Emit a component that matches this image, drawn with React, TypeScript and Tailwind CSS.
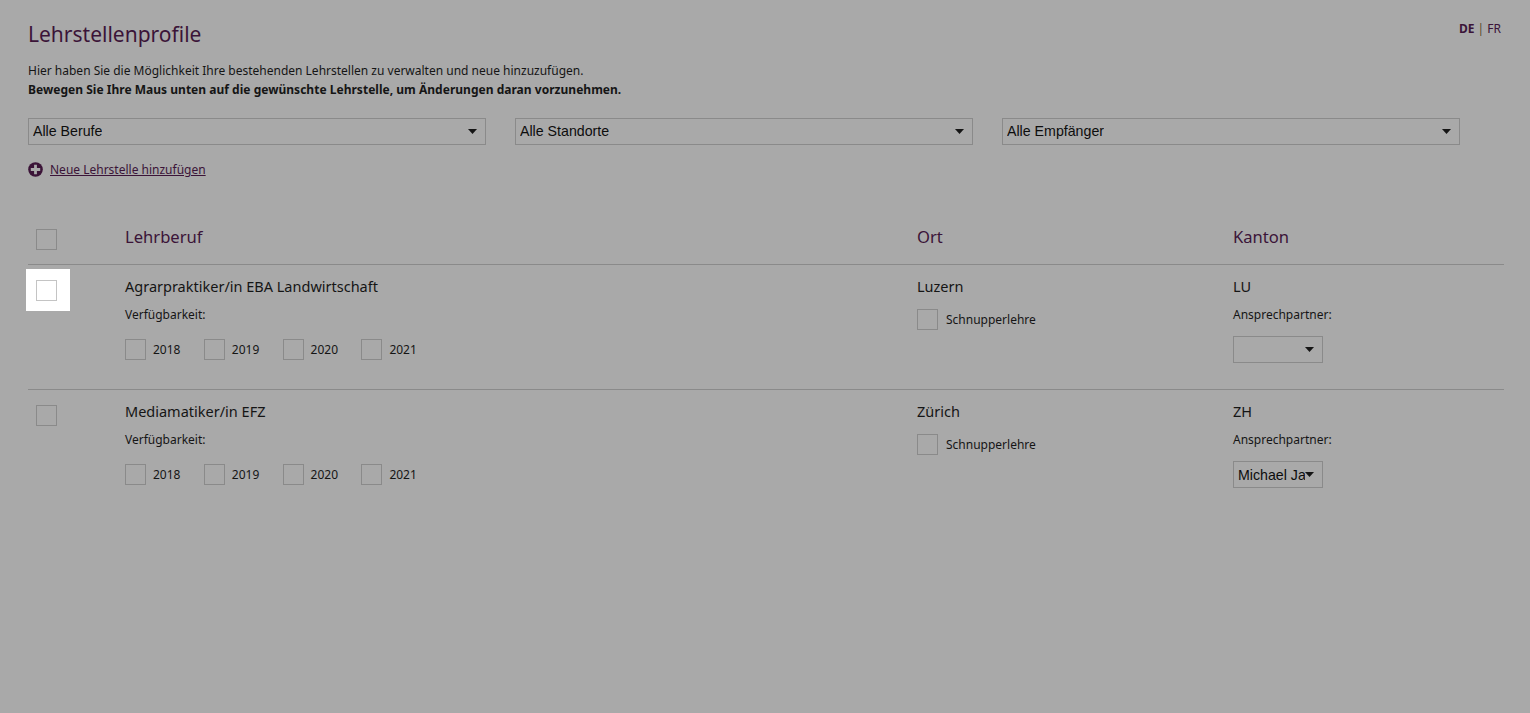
import type { ReactNode } from "react";

const years = ["2018", "2019", "2020", "2021"];

function Box({ className = "" }: { className?: string }) {
  return <div className={`h-[21px] w-[21px] shrink-0 border border-[#8a8a8a] ${className}`} />;
}

function Caret() {
  return (
    <svg width="9" height="5" viewBox="0 0 9 5" className="shrink-0">
      <path d="M0 0h9L4.5 5z" fill="#151515" />
    </svg>
  );
}

function Select({ label, className = "" }: { label: string; className?: string }) {
  return (
    <div
      className={`flex h-[27px] items-center justify-between border border-[#8a8a8a] pl-1 pr-2 font-['Liberation_Sans',sans-serif] text-[14.2px] text-[#0d0d0d] ${className}`}
    >
      <span className="overflow-hidden whitespace-nowrap">{label}</span>
      <Caret />
    </div>
  );
}

function Grid({ children, className = "" }: { children: ReactNode; className?: string }) {
  return <div className={`grid grid-cols-[97px_792px_316px_1fr] ${className}`}>{children}</div>;
}

function Check({ label, width, gap }: { label: string; width?: string; gap: string }) {
  return (
    <div className={`flex items-center ${gap} ${width ?? ""}`}>
      <Box />
      <span className="text-[12px] text-[#151515]">{label}</span>
    </div>
  );
}

function Row({
  title,
  place,
  canton,
  contact,
  active,
}: {
  title: string;
  place: string;
  canton: string;
  contact: string;
  active?: boolean;
}) {
  return (
    <Grid className="h-[125px] border-t border-[#8a8a8a]">
      <div className="pt-[15px] pl-2">
        <div className="relative h-[21px] w-[21px]">
          {active && <div className="absolute -top-[11px] -left-[10px] h-[42px] w-[44px] bg-white" />}
          <Box className={active ? "relative border-[#c4c4c4]" : ""} />
        </div>
      </div>
      <div className="pt-[11px]">
        <div className="text-[14.5px] leading-[20px] text-[#151515]">{title}</div>
        <div className="mt-[10px] text-[12px] leading-[17px] text-[#151515]">Verfügbarkeit:</div>
        <div className="mt-[16px] flex">
          {years.map((year) => (
            <Check key={year} label={year} gap="gap-[7px]" width="w-[78.8px]" />
          ))}
        </div>
      </div>
      <div className="pt-[11px]">
        <div className="text-[14.5px] leading-[20px] text-[#151515]">{place}</div>
        <div className="mt-[13px]">
          <Check label="Schnupperlehre" gap="gap-2" />
        </div>
      </div>
      <div className="pt-[11px]">
        <div className="text-[14.5px] leading-[20px] text-[#151515]">{canton}</div>
        <div className="mt-[10px] text-[12px] leading-[17px] text-[#151515]">Ansprechpartner:</div>
        <Select label={contact} className="mt-[13px] w-[90px] [&>span]:pt-[3px]" />
      </div>
    </Grid>
  );
}

export default function App() {
  return (
    <div className="min-h-[713px] bg-[#a9a9a9] pl-[28px] pr-[26px] font-['Noto_Sans',sans-serif]">
      <div className="flex items-start justify-between pt-[20px]">
        <h1 className="text-[21px] leading-[29px] text-[#3b1438]">Lehrstellenprofile</h1>
        <div className="pt-px pr-[3px] text-[12px] leading-[16px] text-[#3b1438]">
          <span className="font-bold">DE</span> <span className="text-[#5a4a2a]">|</span> FR
        </div>
      </div>
      <p className="mt-[12px] text-[12px] leading-[19px] text-[#151515]">
        Hier haben Sie die Möglichkeit Ihre bestehenden Lehrstellen zu verwalten und neue hinzuzufügen.
        <br />
        <b className="tracking-[0.02px]">
          Bewegen Sie Ihre Maus unten auf die gewünschte Lehrstelle, um Änderungen daran vorzunehmen.
        </b>
      </p>
      <div className="mt-[19px] flex gap-[29px]">
        <Select label="Alle Berufe" className="w-[458px]" />
        <Select label="Alle Standorte" className="w-[458px]" />
        <Select label="Alle Empfänger" className="w-[458px]" />
      </div>
      <div className="mt-[16px] flex items-center gap-[7px]">
        <svg width="15" height="15" viewBox="0 0 15 15" className="shrink-0">
          <circle cx="7.5" cy="7.5" r="7.3" fill="#3b1438" />
          <path d="M7.5 2.8v9.4M2.8 7.5h9.4" stroke="#a9a9a9" strokeWidth="2.8" />
        </svg>
        <a className="text-[12px] leading-[17px] text-[#3b1438] underline">Neue Lehrstelle hinzufügen</a>
      </div>
      <Grid className="mt-[41px] h-[45px]">
        <div className="pl-2 pt-[10px]">
          <Box />
        </div>
        <div className="pt-[6px] text-[16.6px] leading-[24px] text-[#3b1438]">Lehrberuf</div>
        <div className="pt-[6px] text-[16.6px] leading-[24px] text-[#3b1438]">Ort</div>
        <div className="pt-[6px] text-[16.6px] leading-[24px] text-[#3b1438]">Kanton</div>
      </Grid>
      <Row title="Agrarpraktiker/in EBA Landwirtschaft" place="Luzern" canton="LU" contact="" active />
      <Row title="Mediamatiker/in EFZ" place="Zürich" canton="ZH" contact="Michael Ja" />
    </div>
  );
}
